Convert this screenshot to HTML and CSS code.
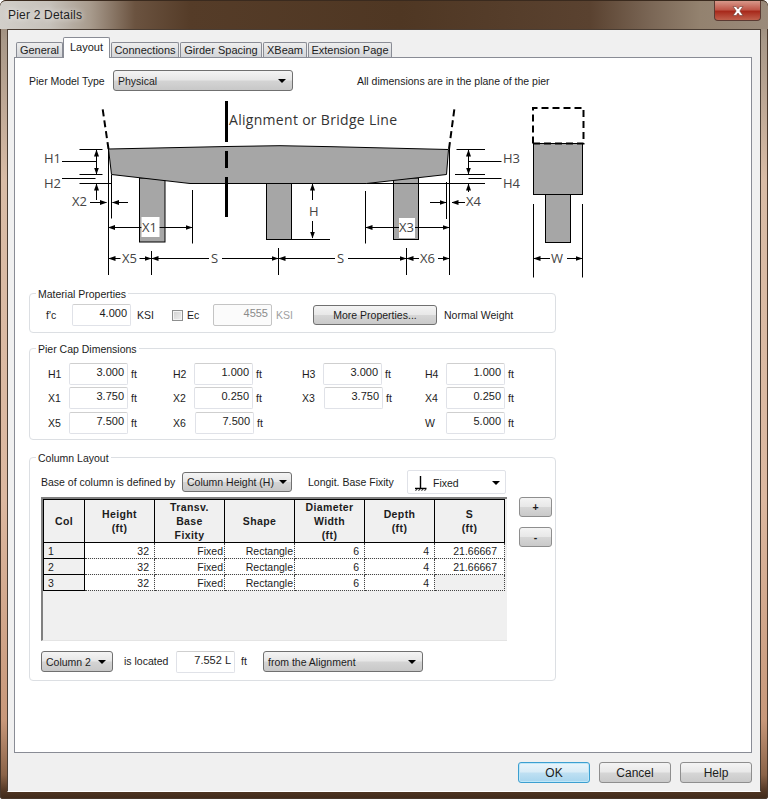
FILE: index.html
```html
<!DOCTYPE html>
<html lang="en">
<head>
<meta charset="utf-8">
<title>Pier 2 Details</title>
<link rel="stylesheet" href="styles.css">
</head>
<body>
<div class="window">
  <div class="titlebar">
    <span class="title">Pier 2 Details</span>
    <div class="close"><svg width="16" height="12" viewBox="0 0 16 12"><path d="M3 1.5 H6.2 L8 4 L9.8 1.5 H13 L9.8 6 L13 10.5 H9.8 L8 8 L6.2 10.5 H3 L6.2 6 Z" fill="#fff" stroke="#6b3a30" stroke-width=".6"/></svg></div>
  </div>
  <div class="client">
    <div class="tabs">
      <div class="tab t-general">General</div>
      <div class="tab tab-active t-layout">Layout</div>
      <div class="tab t-conn">Connections</div>
      <div class="tab t-girder">Girder Spacing</div>
      <div class="tab t-xbeam">XBeam</div>
      <div class="tab t-ext">Extension Page</div>
    </div>
    <div class="panel">
      <div class="model-row">
        <span class="model-label">Pier Model Type</span>
        <div class="combo combo-model"><span>Physical</span><i class="caret"></i></div>
        <span class="model-note">All dimensions are in the plane of the pier</span>
      </div>

      <svg class="diagram" width="570" height="190" viewBox="30 95 570 190">
        <defs>
          <marker id="ah" markerWidth="7" markerHeight="6" refX="6.5" refY="3" orient="auto-start-reverse" markerUnits="userSpaceOnUse">
            <path d="M0 .5 L7 3 L0 5.5 Z" fill="#000"/>
          </marker>
        </defs>
        <g class="shape">
          <rect x="139.5" y="178" width="25.5" height="64"/>
          <rect x="266.5" y="178" width="25" height="61.5"/>
          <rect x="393.5" y="178" width="25" height="61.5"/>
          <path d="M108.5 149 L227 146.5 L280 145.7 L332 146.7 L448.5 149.5 L446.5 174.5 L366.5 183.5 H190 L111.5 174.5 Z"/>
          <rect x="533.5" y="143.5" width="49" height="51"/>
          <rect x="545.5" y="194.5" width="25" height="48"/>
        </g>
        <g class="thick">
          <path d="M226.5 101 V142 M226.5 151 V168 M226.5 177 V217"/>
        </g>
        <g class="dash">
          <path d="M108.5 149 L102.5 108"/>
          <path d="M449 149 L454.5 108"/>
          <path d="M533 143.5 V108 H583.5 V143.5 H533"/>
        </g>
        <g class="thin">
          <path d="M79.5 149.5 H102.5 M79.5 174.5 H102.5 M62 161.5 H96 M62 178.5 H95.5 M79.5 183.5 H112"/>
          <path d="M108.5 149 V275 M111.5 175 V218.5 M192.5 190 V243.5 M151.5 251 V275 M278.5 248 V275 M406.5 248 V275 M449.5 149 V275"/>
          <path d="M456.5 149.5 H485 M455 174.5 H485 M468.5 161.5 H501.5 M468.5 178.5 H501.5 M366.5 183.5 H485"/>
          <path d="M446.5 182 V219 M365.5 191 V243.5 M291.5 239.5 H330"/>
          <path d="M533.5 204 V277.5 M582.5 204 V277.5"/>
        </g>
        <g class="arrows">
          <path marker-start="url(#ah)" marker-end="url(#ah)" d="M96.5 150 V174"/>
          <path marker-start="url(#ah)" d="M96.5 184 V200"/>
          <path marker-end="url(#ah)" d="M90 202.5 H106.5"/>
          <path marker-end="url(#ah)" d="M128 202.5 H112.5"/>
          <path marker-start="url(#ah)" marker-end="url(#ah)" d="M108.5 227.5 H192"/>
          <path marker-start="url(#ah)" marker-end="url(#ah)" d="M366 227.5 H449"/>
          <path marker-start="url(#ah)" marker-end="url(#ah)" d="M468.5 150 V174"/>
          <path marker-start="url(#ah)" d="M468.5 184 V192"/>
          <path marker-end="url(#ah)" d="M430 202.5 H446"/>
          <path marker-end="url(#ah)" d="M465 202.5 H452"/>
          <path marker-start="url(#ah)" d="M312.5 184 V200"/>
          <path marker-end="url(#ah)" d="M312.5 221 V238"/>
          <path marker-start="url(#ah)" marker-end="url(#ah)" d="M109 258.5 H151"/>
          <path marker-start="url(#ah)" marker-end="url(#ah)" d="M152 258.5 H278"/>
          <path marker-start="url(#ah)" marker-end="url(#ah)" d="M279 258.5 H406"/>
          <path marker-start="url(#ah)" marker-end="url(#ah)" d="M407 258.5 H449"/>
          <path marker-start="url(#ah)" marker-end="url(#ah)" d="M534 258.5 H582"/>
        </g>
        <g class="masks">
          <rect x="141.5" y="217" width="18" height="20"/>
          <rect x="399" y="218" width="16" height="20"/>
          <rect x="120.5" y="250" width="19" height="17"/>
          <rect x="209" y="250" width="13" height="17"/>
          <rect x="335" y="250" width="13" height="17"/>
          <rect x="419" y="250" width="19" height="17"/>
          <rect x="550" y="250" width="17" height="17"/>
          <rect x="308" y="203" width="11" height="17"/>
        </g>
        <text class="align-text" x="229" y="125">Alignment or Bridge Line</text>
        <text class="dim" x="44" y="163">H1</text>
        <text class="dim" x="44" y="188">H2</text>
        <text class="dim" x="72" y="206">X2</text>
        <text class="dim" x="142" y="232">X1</text>
        <text class="dim" x="122" y="263">X5</text>
        <text class="dim" x="211" y="263">S</text>
        <text class="dim" x="337" y="263">S</text>
        <text class="dim" x="309" y="216">H</text>
        <text class="dim" x="399" y="232">X3</text>
        <text class="dim" x="420" y="263">X6</text>
        <text class="dim" x="503" y="163">H3</text>
        <text class="dim" x="503" y="188">H4</text>
        <text class="dim" x="466" y="206">X4</text>
        <text class="dim" x="551" y="263">W</text>
      </svg>

      <div class="group group-material">
        <span class="legend">Material Properties</span>
        <div class="material-row">
          <span class="m-fc">f'c</span>
          <div class="input">4.000</div>
          <span class="m-ksi">KSI</span>
          <i class="check"></i>
          <span class="m-ec">Ec</span>
          <div class="input input-off">4555</div>
          <span class="m-ksi2">KSI</span>
          <button class="btn btn-more">More Properties...</button>
          <span class="m-weight">Normal Weight</span>
        </div>
      </div>

      <div class="group group-cap">
        <span class="legend">Pier Cap Dimensions</span>
        <div class="cap-grid">
          <div class="field"><span class="f-label">H1</span><div class="input">3.000</div><span class="unit">ft</span></div>
          <div class="field"><span class="f-label">H2</span><div class="input">1.000</div><span class="unit">ft</span></div>
          <div class="field"><span class="f-label">H3</span><div class="input">3.000</div><span class="unit">ft</span></div>
          <div class="field"><span class="f-label">H4</span><div class="input">1.000</div><span class="unit">ft</span></div>
          <div class="field"><span class="f-label">X1</span><div class="input">3.750</div><span class="unit">ft</span></div>
          <div class="field"><span class="f-label">X2</span><div class="input">0.250</div><span class="unit">ft</span></div>
          <div class="field field-shift"><span class="f-label">X3</span><div class="input">3.750</div><span class="unit">ft</span></div>
          <div class="field"><span class="f-label">X4</span><div class="input">0.250</div><span class="unit">ft</span></div>
          <div class="field"><span class="f-label">X5</span><div class="input">7.500</div><span class="unit">ft</span></div>
          <div class="field field-shift"><span class="f-label">X6</span><div class="input">7.500</div><span class="unit">ft</span></div>
          <div class="field"></div>
          <div class="field"><span class="f-label">W</span><div class="input">5.000</div><span class="unit">ft</span></div>
        </div>
      </div>

      <div class="group group-column">
        <span class="legend">Column Layout</span>
        <div class="base-row">
          <span class="base-label">Base of column is defined by</span>
          <div class="combo combo-base"><span>Column Height (H)</span><i class="caret"></i></div>
          <span class="fix-label">Longit. Base Fixity</span>
          <div class="fix-combo">
            <svg width="14" height="15" viewBox="0 0 14 15"><path d="M6.5 0 V12 M1 12.5 H12.5" stroke="#000" stroke-width="1.4" fill="none"/><path d="M1.5 15 L3 13 M4.5 15 L6 13 M7.5 15 L9 13 M10.5 15 L12 13" stroke="#000" stroke-width=".8"/></svg>
            <span class="fix-text">Fixed</span>
            <i class="caret"></i>
          </div>
        </div>
        <div class="table-row">
          <div class="table-box">
            <table class="grid">
              <thead>
                <tr><th>Col</th><th>Height<br>(ft)</th><th>Transv.<br>Base<br>Fixity</th><th>Shape</th><th>Diameter<br>Width<br>(ft)</th><th>Depth<br>(ft)</th><th>S<br>(ft)</th></tr>
              </thead>
              <tbody>
                <tr><th class="rowhead">1</th><td>32</td><td class="flush">Fixed</td><td class="flush">Rectangle</td><td>6</td><td>4</td><td class="wide">21.66667</td></tr>
                <tr><th class="rowhead">2</th><td>32</td><td class="flush">Fixed</td><td class="flush">Rectangle</td><td>6</td><td>4</td><td class="wide">21.66667</td></tr>
                <tr><th class="rowhead">3</th><td>32</td><td class="flush">Fixed</td><td class="flush">Rectangle</td><td>6</td><td>4</td><td class="cell-off"></td></tr>
              </tbody>
            </table>
          </div>
          <div class="side-btns">
            <button class="btn btn-side">+</button>
            <button class="btn btn-side">-</button>
          </div>
        </div>
        <div class="locate-row">
          <div class="combo combo-col"><span>Column 2</span><i class="caret"></i></div>
          <span class="loc-label">is located</span>
          <div class="input">7.552 L</div>
          <span class="loc-unit">ft</span>
          <div class="combo combo-from"><span>from the Alignment</span><i class="caret"></i></div>
        </div>
      </div>
    </div>
    <div class="footer">
      <button class="btn btn-foot btn-ok">OK</button>
      <button class="btn btn-foot">Cancel</button>
      <button class="btn btn-foot">Help</button>
    </div>
  </div>
</div>
</body>
</html>
```
FILE: styles.css
```css
* { box-sizing: border-box; }
html, body { margin: 0; padding: 0; background: #fff; }
body { font: 10.5px "Liberation Sans", Arial, sans-serif; color: #1c1c1c; }
.window {
  width: 768px; height: 799px; padding: 0 7px 7px;
  border-radius: 6px 6px 3px 3px;
  overflow: hidden;
  background: linear-gradient(180deg, #8f7f70 0, #a89888 40px, #d9bca6 180px, #dcb8a0 500px, #c8987a 720px, #8a6348 775px, #4e3422 792px, #3f2a1b 799px);
  box-shadow: inset 0 0 0 1px #4a382b;
}
.titlebar {
  height: 29px; margin: 0 -7px; padding: 0 7px 0 8px;
  display: flex; justify-content: space-between; align-items: flex-start;
  background: linear-gradient(90deg, #d2cfca 0, #c6c1ba 50px, #a89b8d 90px, #6b5340 135px, #553c28 190px, #4f3723 400px, #5a4230 590px, #7a6655 650px, #93826f 700px, #9a8a7a 768px);
  border-top: 1px solid #3a2a1e; border-radius: 6px 6px 0 0;
}
.title { margin-top: 7px; font-size: 12px; color: #1e1e1e; text-shadow: 0 0 6px #fff; letter-spacing: .2px; }
.close {
  width: 47px; height: 20px; margin-right: 0;
  display: flex; align-items: center; justify-content: center;
  border: 1px solid #5b3a32; border-top: 0; border-radius: 0 0 4px 4px;
  background: linear-gradient(180deg, #d8988a 0, #c0584a 45%, #a82a1c 55%, #c0604c 100%);
}
.client {
  height: 763px; padding: 7px 8px 0 6px;
  background: #f0f0f0; border: 1px solid #4a3d33; border-bottom-color: #fff;
}
.tabs { display: flex; align-items: flex-end; height: 21px; padding-left: 2px; position: relative; z-index: 1; }
.tab {
  height: 15px; margin-right: 1px; margin-bottom: 1px;
  display: flex; align-items: center; justify-content: center;
  font-size: 11px; color: #1c1c1c;
  background: linear-gradient(180deg, #eeeeee, #d3d5d9);
  border: 1px solid #898c95; border-bottom: 0; border-radius: 2px 2px 0 0;
}
.tab-active { height: 21px; margin: 0; padding-bottom: 3px; background: #fff; }
.t-general { width: 47px; margin-right: 0; }
.t-layout { width: 47px; margin-right: 1px; }
.t-conn { width: 68px; }
.t-girder { width: 82px; }
.t-xbeam { width: 44px; }
.t-ext { width: 84px; }
.panel {
  width: 738px; height: 696px; margin-top: -1px; padding: 12px 0 0 14px;
  background: #fff; border: 1px solid #898c95;
}
.model-row { display: flex; align-items: center; height: 21px; }
.model-label { width: 84px; }
.combo {
  display: flex; align-items: center; justify-content: space-between;
  height: 21px; padding: 0 6px 0 4px; flex: none; white-space: nowrap;
  border: 1px solid #707070; border-radius: 3px;
  background: linear-gradient(180deg, #f4f4f4 0, #e6e6e6 48%, #d4d4d4 52%, #c8c8c8 100%);
}
.caret { display: block; width: 0; height: 0; flex: none; border: 4px solid transparent; border-top: 4px solid #000; border-bottom: 0; }
.combo-model { width: 180px; }
.model-note { margin-left: 64px; }
.diagram { display: block; margin: 4px 0 0 1px; }
.shape { fill: #a6a6a6; stroke: #000; stroke-width: 1; }
.thick { fill: none; stroke: #000; stroke-width: 3; }
.dash { fill: none; stroke: #000; stroke-width: 2; stroke-dasharray: 7 4; }
.thin { fill: none; stroke: #000; stroke-width: 1; }
.arrows { fill: none; stroke: #000; stroke-width: 1; }
.masks { fill: #fff; }
.align-text { font: 14px "Open Sans", sans-serif; fill: #333; letter-spacing: .3px; }
.dim { font: 13px "Open Sans", sans-serif; fill: #444; }
.group {
  position: relative; width: 527px;
  border: 1px solid #dcdfe3; border-radius: 4px;
}
.legend { position: absolute; top: -6px; left: 6px; padding: 0 2px; background: #fff; line-height: 13px; }
.group-material { height: 40px; margin-top: 8px; padding: 10px 0 0 16px; }
.material-row { display: flex; align-items: center; height: 22px; }
.input {
  width: 59px; height: 22px; flex: none; padding: 0 3px 0 0; text-align: right; line-height: 17px; font-size: 11px;
  background: #fff; border: 1px solid #e0e2e8; border-top-color: #cfcfcf; border-radius: 2px;
}
.input-off { color: #8a8a8a; background: #fbfbfb; border-color: #c4c4c4; }
.m-fc { width: 26px; }
.m-ksi { width: 35px; margin-left: 6px; }
.check { display: block; width: 11px; height: 11px; flex: none; border: 1px solid #8e8f8f; background: linear-gradient(135deg, #d0d0d0, #f0f0f0); box-shadow: inset 0 0 0 1px #f4f4f4; }
.m-ec { width: 26px; margin-left: 4px; }
.m-ksi2 { width: 37px; margin-left: 4px; color: #a0a0a0; }
.btn {
  font: 10.5px "Liberation Sans", Arial, sans-serif; color: #1c1c1c; padding: 0;
  border: 1px solid #707070; border-radius: 3px;
  background: linear-gradient(180deg, #f4f4f4 0, #e8e8e8 48%, #d6d6d6 52%, #c9c9c9 100%);
}
.btn-more { width: 124px; height: 20px; flex: none; }
.m-weight { margin-left: 7px; }
.group-cap { height: 92px; margin-top: 15px; padding: 14px 0 0 18px; }
.cap-grid { display: grid; grid-template-columns: 125px 129px 123px 1fr; grid-template-rows: 24px 25px 22px; }
.field { display: flex; align-items: center; height: 22px; }
.f-label { width: 21px; }
.field-shift .f-label { width: 22px; }
.unit { margin-left: 3px; }
.group-column { height: 224px; margin-top: 17px; padding: 12px 0 0 11px; }
.base-row { display: flex; align-items: center; height: 24px; }
.base-label { width: 141px; flex: none; }
.combo-base { width: 110px; height: 20px; padding-right: 4px; }
.fix-label { margin-left: 16px; width: 99px; flex: none; }
.fix-combo {
  display: flex; align-items: center; width: 99px; height: 24px; padding: 2px 5px 0 6px;
  background: #fff; border: 1px solid #e0e2e8; border-radius: 2px;
}
.fix-text { margin-left: 5px; flex: 1; }
.table-row { display: flex; margin-top: 3px; }
.table-box {
  width: 466px; height: 144px; background: #f0f0f0;
  border-top: 2px solid #808080; border-left: 2px solid #808080; border-bottom: 1px solid #e4e4e4;
}
.grid { border-collapse: collapse; table-layout: fixed; width: 461px; }
.grid th, .grid td { width: 70px; height: 16px; padding: 0; color: #1c1c1c; font-size: 10.5px; line-height: 14px; overflow: hidden; white-space: nowrap; }
.grid thead th { height: 43px; background: #f0f0f0; border: 1px solid #000; font-weight: bold; letter-spacing: .4px; }
.grid thead th:first-child, .grid .rowhead { width: 41px; }
.grid .rowhead { height: 16px; padding-left: 4px; text-align: left; font-weight: normal; background: #f0f0f0; border: 1px solid #000; }
.grid td { padding-right: 5px; text-align: right; background: #fff; border: 1px dotted #444; }
.grid .flush { padding-right: 1px; }
.grid .wide { padding-right: 7px; }
.grid .cell-off { background: #f0f0f0; }
.side-btns { display: flex; flex-direction: column; gap: 10px; margin-left: 12px; }
.btn-side { width: 33px; height: 20px; font-weight: bold; border-color: #8e8e8e; }
.locate-row { display: flex; align-items: flex-start; margin-top: 10px; }
.combo-col { width: 72px; }
.loc-label { width: 52px; margin-left: 11px; line-height: 20px; }
.loc-unit { width: 22px; margin-left: 6px; line-height: 20px; }
.combo-from { width: 160px; }
.footer { display: flex; justify-content: flex-end; gap: 9px; margin-top: 9px; width: 738px; }
.btn-foot { width: 72px; height: 21px; font-size: 12px; border-color: #8e8e8e; }
.btn-ok { border-color: #3c9fd0; background: linear-gradient(180deg, #eaf5fb 0, #d8ecf7 48%, #bfe0f2 52%, #a7d5ee 100%); box-shadow: inset 0 0 0 1px #bfe7f8; }
```
